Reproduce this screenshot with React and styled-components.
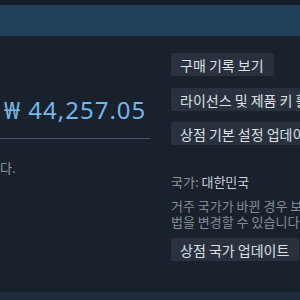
import styled, { createGlobalStyle } from "styled-components";

const GlobalStyle = createGlobalStyle`
  html, body {
    margin: 0;
    padding: 0;
    background: #19212d;
  }
  body {
    font-family: "Noto Sans", "Noto Sans CJK KR", sans-serif;
  }
`

const Page = styled.div`
  width: 300px;
  height: 300px;
  overflow: hidden;
  display: flex;
  flex-direction: column;
  background: #19212d;
`

const TopStrip = styled.div`
  height: 5px;
  background: #161c26;
  flex-shrink: 0;
`

const Banner = styled.div`
  height: 31px;
  background: #223f5b;
  flex-shrink: 0;
`

const Main = styled.div`
  flex: 1;
  display: grid;
  grid-template-columns: 150px 1fr;
  column-gap: 21px;
  overflow: hidden;
`

const LeftColumn = styled.div`
  display: flex;
  flex-direction: column;
  padding-top: 59px;
`

const Balance = styled.div`
  font-size: 24px;
  line-height: 30px;
  color: #74b6e6;
  padding-left: 4px;
  letter-spacing: 1px;
  white-space: nowrap;
`

const Divider = styled.div`
  height: 1px;
  background: #4a5566;
  margin-top: 13px;
`

const Note = styled.div`
  margin-top: 19px;
  font-size: 13px;
  color: #8f98a0;
  white-space: nowrap;
  font-family: "Noto Sans CJK KR", sans-serif;
`

const RightColumn = styled.div`
  display: flex;
  flex-direction: column;
  align-items: flex-start;
  padding-top: 17px;
  overflow: hidden;
  font-family: "Noto Sans CJK KR", sans-serif;
`

const Button = styled.div`
  height: 23px;
  display: flex;
  align-items: center;
  padding: 0 ${p => (p.$wide ? "40px" : "10px")} 0 9px;
  background: #29313e;
  color: #dde1e5;
  font-size: 14px;
  border-radius: 2px;
  white-space: nowrap;
  margin-bottom: ${p => p.$gap || 0}px;
`

const Country = styled.div`
  margin-top: 27px;
  font-size: 13px;
  color: #8a939c;
  white-space: nowrap;
`

const CountryName = styled.span`
  color: #c9d0d6;
`

const Help = styled.div`
  margin-top: 7px;
  font-size: 13px;
  line-height: 16px;
  color: #858e97;
  white-space: nowrap;
  margin-bottom: 8px;
`

const BottomStrip = styled.div`
  height: 8px;
  background: #1f2b3b;
  flex-shrink: 0;
`

export default function App() {
  return (
    <Page>
      <GlobalStyle />
      <TopStrip />
      <Banner />
      <Main>
        <LeftColumn>
          <Balance>₩ 44,257.05</Balance>
          <Divider />
          <Note>다.</Note>
        </LeftColumn>
        <RightColumn>
          <Button $gap={12}>구매 기록 보기</Button>
          <Button $gap={11} $wide>라이선스 및 제품 키 활성화</Button>
          <Button $wide>상점 기본 설정 업데이트</Button>
          <Country>
            국가: <CountryName>대한민국</CountryName>
          </Country>
          <Help>
            거주 국가가 바뀐 경우 보유하신 지갑의 결제 방
            <br />
            법을 변경할 수 있습니다.
          </Help>
          <Button>상점 국가 업데이트</Button>
        </RightColumn>
      </Main>
      <BottomStrip />
    </Page>
  );
}
